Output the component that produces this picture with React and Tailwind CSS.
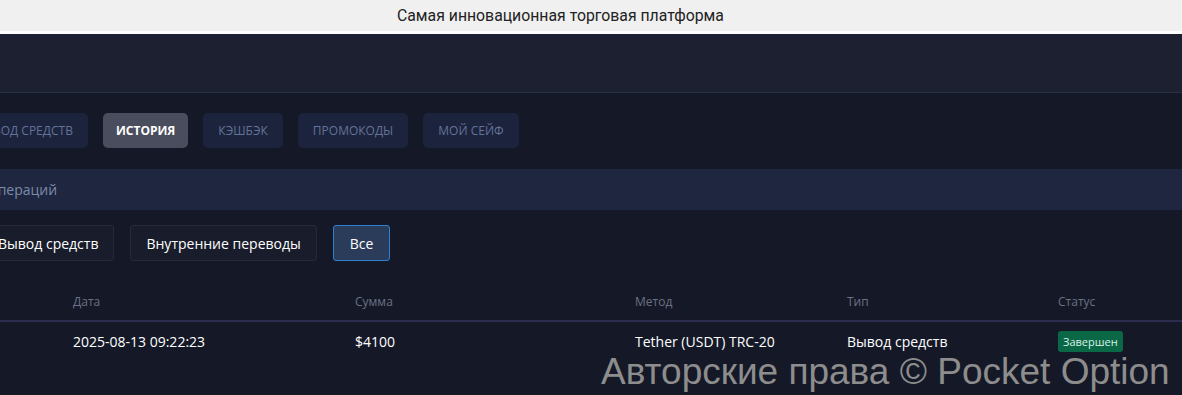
const TABS = [
  { label: "Вывод средств", cls: "px-[15px]" },
  { label: "История", active: true, cls: "px-[13px]" },
  { label: "Кэшбэк", cls: "px-[15px]" },
  { label: "Промокоды", cls: "px-[15px]" },
  { label: "Мой сейф", cls: "px-[15px]" },
]

const FILTERS = [
  { label: "Вывод средств", cls: "px-[15px]" },
  { label: "Внутренние переводы", cls: "px-[15px]" },
  { label: "Все", active: true, cls: "px-[16px]" },
]

const COLS = [
  { key: "date", label: "Дата", w: "w-[282px]" },
  { key: "sum", label: "Сумма", w: "w-[280px]" },
  { key: "method", label: "Метод", w: "w-[212px]" },
  { key: "type", label: "Тип", w: "w-[211px]" },
  { key: "status", label: "Статус", w: "w-[120px]" },
]

const rows = [
  {
    id: 1,
    date: "2025-08-13 09:22:23",
    sum: "$4100",
    method: "Tether (USDT) TRC-20",
    type: "Вывод средств",
    status: "Завершен",
  },
]

export default function App() {
  return (
    <div className="relative h-[395px] w-[1182px] overflow-hidden bg-[#151927] font-['Open_Sans',sans-serif]">
      {/* browser-ish top strip */}
      <div className="flex h-[31px] items-center bg-[#f0f0f0] pl-[397px] font-['Roboto',sans-serif] text-[15.8px] text-[#222]">
        Самая инновационная торговая платформа
      </div>
      <div className="h-[3px] bg-white" />

      {/* header */}
      <div className="h-[59px] border-b border-[#26323f] bg-[#1d2030]" />

      {/* tabs */}
      <div className="-ml-[40px] mt-[20px] flex gap-[15px]">
        {TABS.map((t) => (
          <div
            key={t.label}
            className={`flex h-[35px] items-center rounded-[5px] text-[12px] uppercase ${t.cls} ${
              t.active ? "bg-[#4a4d5d] font-bold text-white" : "bg-[#1c233c] text-[#63739a]"
            }`}
          >
            {t.label}
          </div>
        ))}
      </div>

      {/* section title */}
      <div className="mt-[21px] flex h-[41px] items-center bg-[#1e2640] text-[14px] text-[#7c8bab]">
        <span className="-ml-[72px]">История операций</span>
      </div>

      {/* filters */}
      <div className="-ml-[18px] mt-[15px] flex gap-[16px]">
        {FILTERS.map((f) => (
          <div
            key={f.label}
            className={`flex h-[36px] items-center rounded-[3px] border text-[14px] font-medium text-white ${f.cls} ${
              f.active ? "border-[#2d82d2] bg-[#2b3c5a]" : "border-[#262a38] bg-[#191d2b]"
            }`}
          >
            {f.label}
          </div>
        ))}
      </div>

      {/* table */}
      <div className="mt-[22px]">
        <div className="flex h-[39px] items-center border-b-2 border-[#2d2b4e] pl-[73px] text-[12px] text-[#6b7183]">
          {COLS.map((c) => (
            <div key={c.key} className={c.w}>{c.label}</div>
          ))}
        </div>
        {rows.map((r) => (
          <div key={r.id} className="flex h-[38px] items-center pl-[73px] text-[14px] font-medium text-white">
            <div className="w-[282px]">{r.date}</div>
            <div className="w-[280px]">{r.sum}</div>
            <div className="w-[212px]">{r.method}</div>
            <div className="w-[211px]">{r.type}</div>
            <div className="w-[120px]">
              <span className="inline-flex h-[21px] items-center rounded-[3px] bg-[#0a6847] px-[5px] text-[11px] font-medium text-[#d8f2e6]">
                {r.status}
              </span>
            </div>
          </div>
        ))}
      </div>

      {/* watermark */}
      <div className="absolute left-[601px] top-[353px] whitespace-nowrap font-['Liberation_Sans',Arial,sans-serif] text-[37px] leading-none text-[#8d8d8d]">
        Авторские права © Pocket Option
      </div>
    </div>
  )
}
